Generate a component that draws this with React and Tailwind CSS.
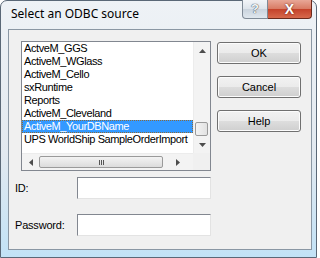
const SOURCES = [
  "ActveM_GGS",
  "ActiveM_WGlass",
  "ActiveM_Cello",
  "sxRuntime",
  "Reports",
  "ActiveM_Cleveland",
  "ActiveM_YourDBName",
  "UPS WorldShip SampleOrderImport",
];

const SELECTED = "ActiveM_YourDBName";

function DialogButton({ children }) {
  return (
    <button className="flex h-[22px] w-[84px] items-center justify-center rounded-[3px] border border-[#707070] bg-[linear-gradient(#f2f2f2_0%,#ebebeb_50%,#dddddd_51%,#cfcfcf_100%)] text-[11px] text-black shadow-[inset_0_0_0_1px_#fcfcfc]">
      {children}
    </button>
  );
}

function Arrow({ dir }) {
  const paths = {
    up: "M0 4 L3.5 0 L7 4 Z",
    down: "M0 0 L7 0 L3.5 4 Z",
  };
  if (dir === "left" || dir === "right") {
    return (
      <svg width="4" height="7" viewBox="0 0 4 7">
        <path d={dir === "left" ? "M4 0 L0 3.5 L4 7 Z" : "M0 0 L4 3.5 L0 7 Z"} fill="#4d4d4d" />
      </svg>
    );
  }
  return (
    <svg width="7" height="4" viewBox="0 0 7 4">
      <path d={paths[dir]} fill="#4d4d4d" />
    </svg>
  );
}

function SourceList() {
  return (
    <div className="flex h-[130px] w-[190px] flex-col border border-[#828790] bg-white">
      <div className="flex h-[111px]">
        <ul className="flex-1 overflow-hidden">
          {SOURCES.map((s) => (
            <li
              key={s}
              className={
                s === SELECTED
                  ? "h-[13px] whitespace-nowrap bg-[#3399ff] pl-[2px] text-[11px] leading-[13px] tracking-[-0.4px] text-white outline-1 -outline-offset-1 outline-dotted outline-[#8a6a3a]"
                  : "h-[13px] whitespace-nowrap pl-[2px] text-[11px] leading-[13px] tracking-[-0.4px] text-black"
              }
            >
              {s}
            </li>
          ))}
        </ul>
        <div className="flex w-[17px] flex-col items-center border-l border-[#ececec] bg-[#f3f3f3]">
          <div className="flex h-[17px] items-center justify-center">
            <Arrow dir="up" />
          </div>
          <div className="relative w-full flex-1">
            <div className="absolute left-[1px] right-[2px] top-[63px] h-[14px] rounded-[2px] border border-[#9a9a9a] bg-[linear-gradient(90deg,#f3f3f3,#e2e2e2)]" />
          </div>
          <div className="flex h-[17px] items-center justify-center">
            <Arrow dir="down" />
          </div>
        </div>
      </div>
      <div className="flex h-[17px]">
        <div className="flex flex-1 items-center border-t border-[#ececec] bg-[#f3f3f3]">
          <div className="flex w-[17px] justify-center">
            <Arrow dir="left" />
          </div>
          <div className="flex h-[12px] w-[124px] items-center justify-center rounded-[2px] border border-[#9a9a9a] bg-[linear-gradient(#f3f3f3,#dcdcdc)]">
            <span className="flex gap-[1px]">
              <span className="h-[5px] w-[1px] bg-[#555]" />
              <span className="h-[5px] w-[1px] bg-[#555]" />
              <span className="h-[5px] w-[1px] bg-[#555]" />
            </span>
          </div>
          <div className="flex flex-1 justify-center">
            <Arrow dir="right" />
          </div>
        </div>
        <div className="w-[17px] bg-[#f0f0f0]" />
      </div>
    </div>
  );
}

function Field({ label, className }) {
  return (
    <div className={"flex items-center " + className}>
      <span className="w-[68px] pl-[6px] text-[11px] tracking-[-0.2px] text-black">{label}</span>
      <div className="h-[22px] w-[134px] border border-[#828790] border-b-[#e3e3e3] border-r-[#e3e3e3] bg-white" />
    </div>
  );
}

export default function App() {
  return (
    <div className="h-[258px] w-[320px] bg-white font-['Liberation_Sans',Arial,sans-serif]">
      <div className="flex h-[258px] w-[317px] flex-col rounded-t-[7px] border border-[#5a6877] bg-[linear-gradient(#eef2f6_0%,#e2e9f0_60%,#c2e2f6_100%)]">
        <div className="flex h-[28px] items-start">
          <span className="pl-[10px] pt-[5px] font-['Noto_Sans',sans-serif] text-[12px] leading-[16px] text-black">
            Select an ODBC source
          </span>
          <div className="-mt-px ml-auto mr-[4px] flex h-[19px]">
            <div className="flex w-[26px] items-center justify-center rounded-bl-[4px] border border-t-0 border-[#7f8a96] bg-[linear-gradient(#f2f5f8_0%,#dde4eb_50%,#c9d3dd_51%,#dfe7ee_100%)] text-[13px] font-bold text-[#f4f6f8] [text-shadow:0_0_1px_#3c4650,0_0_1px_#3c4650]">
              ?
            </div>
            <div className="flex w-[44px] items-center justify-center rounded-br-[4px] border border-l-0 border-t-0 border-[#6b2a1c] bg-[linear-gradient(#e8a797_0%,#d87a63_50%,#c4422a_51%,#d7694c_100%)] text-[14px] font-bold leading-none text-white [text-shadow:0_0_2px_#5a1a10]">
              X
            </div>
          </div>
        </div>
        <div className="ml-[7px] flex h-[221px] w-[304px] flex-col border border-[#8a97a4] bg-[#f0f0f0]">
          <div className="flex pl-[12px] pt-[11px]">
            <SourceList />
            <div className="ml-[6px] mt-[1px] flex flex-col gap-[12px]">
              <DialogButton>OK</DialogButton>
              <DialogButton>Cancel</DialogButton>
              <DialogButton>Help</DialogButton>
            </div>
          </div>
          <Field label="ID:" className="mt-[6px]" />
          <Field label="Password:" className="mt-[15px]" />
        </div>
      </div>
    </div>
  );
}
